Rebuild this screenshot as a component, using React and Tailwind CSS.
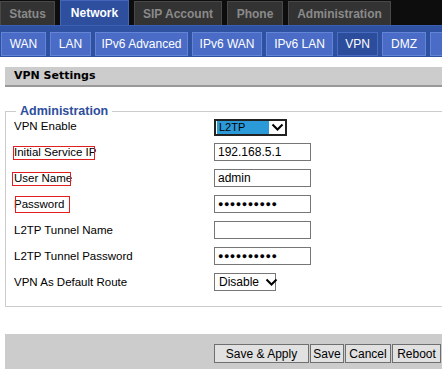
import React from "react";

const topTabs = [
  { label: "Status", w: "w-[55px]" },
  { label: "Network", w: "w-[69px]", active: true },
  { label: "SIP Account", w: "w-[88px]" },
  { label: "Phone", w: "w-[56px]" },
  { label: "Administration", w: "w-[103px]" },
];

const subTabs = [
  { label: "WAN", w: "w-[45px]" },
  { label: "LAN", w: "w-[41px]" },
  { label: "IPv6 Advanced", w: "w-[93px]" },
  { label: "IPv6 WAN", w: "w-[70px]" },
  { label: "IPv6 LAN", w: "w-[67px]" },
  { label: "VPN", w: "w-[41px]", active: true },
  { label: "DMZ", w: "w-[44px]" },
  { label: "", w: "w-[40px]" },
];

function Chevron() {
  return (
    <svg width="13" height="9" viewBox="0 0 13 9" className="shrink-0">
      <path d="M1.5 1.5 L6.5 6.5 L11.5 1.5" fill="none" stroke="#000" strokeWidth="2" />
    </svg>
  );
}

function Input({ value, dots }) {
  return (
    <div className="w-[97px] h-[18px] border border-[#767676] bg-white flex items-center px-[3px] text-[12px] leading-none text-black">
      {dots ? <span className="text-[9px] tracking-[0.5px]">●●●●●●●●●●</span> : value}
    </div>
  );
}

function Row({ label, children, box }) {
  return (
    <div className="flex items-center h-[26px]">
      <div className="w-[200px] relative text-[11.5px] leading-[13px] text-black">
        {label}
        {box}
      </div>
      {children}
    </div>
  );
}

export default function App() {
  return (
    <div
      className="w-[442px] h-[369px] overflow-hidden bg-white flex flex-col"
      style={{ fontFamily: '"Liberation Sans", Arial, sans-serif' }}
    >
      {/* top nav */}
      <div className="h-[25px] bg-[#0d0d0d] flex items-end gap-[5px] shrink-0">
        {topTabs.map((t) => (
          <div
            key={t.label}
            className={
              t.w +
              " flex items-center justify-center font-bold text-[12px] border-t border-x " +
              (t.active
                ? "h-[25px] bg-[#2d4f9e] border-[#4567bb] text-white"
                : "h-[24px] bg-[#333333] border-[#484848] text-[#8a8a8a]")
            }
          >
            {t.label}
          </div>
        ))}
      </div>
      {/* sub nav */}
      <div className="h-[32px] bg-[#2f51a1] flex items-start gap-[4px] pt-[6px] pl-[1px] shrink-0 overflow-hidden border-t border-[#3d5fb3]">
        {subTabs.map((t, i) => (
          <div
            key={i}
            className={
              t.w +
              " h-[24px] shrink-0 flex items-center justify-center text-[12px] text-white border " +
              (t.active
                ? "bg-[#2c4d9c] border-[#4a6cc0]"
                : "bg-[#4a6cc6] border-[#6485d6]")
            }
          >
            {t.label}
          </div>
        ))}
      </div>

      {/* content */}
      <div className="pl-[5px] pt-[10px] flex flex-col">
        <div
          className="h-[20px] bg-[#cccccc] border-b-2 border-[#999999] flex items-center pl-[9px] text-[11px] font-bold text-black"
          style={{ fontFamily: '"DejaVu Sans", Verdana, sans-serif' }}
        >
          VPN Settings
        </div>

        <fieldset className="mt-[17px] border border-[#cccccc] border-r-0 pl-[8px] pb-[11px] mr-[-2px] h-[203px]">
          <legend className="ml-[2px] px-[4px] text-[12.5px] font-bold text-[#2e4e9c] leading-[14px]">
            Administration
          </legend>
          <div className="flex flex-col -mt-[1px]">
            <div className="flex items-center h-[20px]">
              <div className="w-[200px] text-[11.5px] text-black">VPN Enable</div>
              <div className="w-[73px] h-[17px] border-2 border-[#222] bg-white flex items-center">
                <div className="w-[52px] h-[13px] bg-[#2b9ad8] text-[11px] text-black leading-[13px] pl-[2px] ml-[1px]">L2TP</div>
                <div className="flex-1 flex justify-center">
                  <Chevron />
                </div>
              </div>
            </div>
            <div className="h-[2px]" />
            <Row
              label="Initial Service IP"
              box={<span className="absolute left-[-1px] top-[0px] w-[82px] h-[14px] border border-[#e02020]" />}
            >
              <Input value="192.168.5.1" />
            </Row>
            <Row
              label="User Name"
              box={<span className="absolute left-[-2px] top-[0px] w-[59px] h-[14px] border border-[#e02020]" />}
            >
              <Input value="admin" />
            </Row>
            <Row
              label="Password"
              box={<span className="absolute left-[1px] top-[-2px] w-[55px] h-[17px] border border-[#e02020]" />}
            >
              <Input dots />
            </Row>
            <Row label="L2TP Tunnel Name">
              <Input value="" />
            </Row>
            <Row label="L2TP Tunnel Password">
              <Input dots />
            </Row>
            <Row label="VPN As Default Route">
              <div className="w-[62px] h-[18px] border border-[#767676] bg-white flex items-center pl-[4px] pr-[4px] text-[12px] text-black gap-[6px]">
                <span>Disable</span>
                <Chevron />
              </div>
            </Row>
          </div>
        </fieldset>

        <div className="mt-[27px] h-[40px] bg-[#cccccc] flex items-start justify-end pt-[10px] pr-[1px] gap-[1px]">
          {[
            ["Save & Apply", "w-[95px]"],
            ["Save", "w-[34px]"],
            ["Cancel", "w-[46px]"],
            ["Reboot", "w-[49px]"],
          ].map(([l, w]) => (
            <div
              key={l}
              className={w + " h-[19px] bg-[#e1e1e1] border border-[#6f6f6f] flex items-center justify-center text-[12px] text-black"}
            >
              {l}
            </div>
          ))}
        </div>
      </div>
    </div>
  );
}
